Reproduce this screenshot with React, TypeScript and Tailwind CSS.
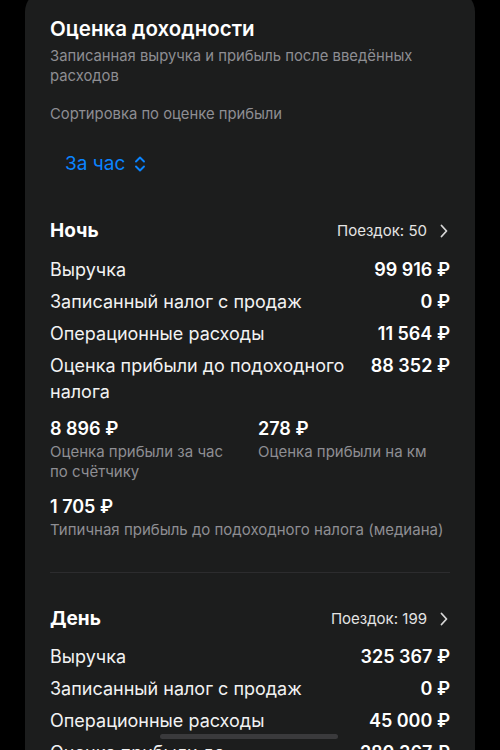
const font = { fontFamily: 'Inter, "Noto Sans", sans-serif' };

type Row = { label: string; value: string };

const Chevron = () => (
  <svg width="8" height="14" viewBox="0 0 8 14" fill="none" className="shrink-0">
    <path d="M1.5 1.5 L6.5 7 L1.5 12.5" stroke="#d6d6d6" strokeWidth="1.8" strokeLinecap="round" strokeLinejoin="round" />
  </svg>
);

const UpDown = () => (
  <svg width="12" height="18" viewBox="0 0 12 18" fill="none">
    <path d="M2 6.5 L6 2.5 L10 6.5" stroke="#0a84ff" strokeWidth="1.9" strokeLinecap="round" strokeLinejoin="round" />
    <path d="M2 11.5 L6 15.5 L10 11.5" stroke="#0a84ff" strokeWidth="1.9" strokeLinecap="round" strokeLinejoin="round" />
  </svg>
);

const Rows = ({ rows }: { rows: Row[] }) => (
  <div className="flex flex-col gap-[6px]">
    {rows.map((r) => (
      <div key={r.label} className="flex items-start justify-between gap-4 text-[18px] leading-[26px]">
        <span className="text-[#f2f2f2]">{r.label}</span>
        <span className="shrink-0 font-semibold text-white">{r.value}</span>
      </div>
    ))}
  </div>
);

const Header = ({ title, trips }: { title: string; trips: number }) => (
  <div className="flex items-center justify-between">
    <h3 className="text-[19px] font-bold leading-[24px] text-white">{title}</h3>
    <div className="flex items-center gap-[13px] pr-[2px] text-[15px] text-[#e4e4e4]">
      <span>Поездок: {trips}</span>
      <Chevron />
    </div>
  </div>
);

const Metric = ({ value, label, narrow }: { value: string; label: string; narrow?: boolean }) => (
  <div>
    <div className="text-[18px] font-semibold leading-[24px] text-white">{value}</div>
    <div className={`mt-[1px] text-[15px] leading-[20px] text-[#8e8e93] ${narrow ? 'max-w-[185px]' : ''}`}>{label}</div>
  </div>
);

export default function App() {
  return (
    <div className="relative h-[750px] overflow-hidden bg-black" style={font}>
      <div className="mx-[25px] -mt-[10px] rounded-t-[22px] bg-[#1c1d1d] px-[25px] pt-[26px] pb-10">
        <h1 className="text-[20.5px] font-semibold leading-[26px] text-white">Оценка доходности</h1>
        <p className="mt-[4px] text-[14.8px] leading-[20px] text-[#8e8e93]">
          Записанная выручка и прибыль после введённых расходов
        </p>
        <p className="mt-[18px] text-[14.8px] leading-[20px] text-[#8e8e93]">Сортировка по оценке прибыли</p>
        <div className="mt-[28px] flex items-center gap-[9px] pl-[15px] text-[19px] leading-[24px] text-[#0a84ff]">
          <span>За час</span>
          <UpDown />
        </div>

        <div className="mt-[43px]">
          <Header title="Ночь" trips={50} />
        </div>
        <div className="mt-[14px]">
          <Rows
            rows={[
              { label: 'Выручка', value: '99 916 ₽' },
              { label: 'Записанный налог с продаж', value: '0 ₽' },
              { label: 'Операционные расходы', value: '11 564 ₽' },
              { label: 'Оценка прибыли до подоходного налога', value: '88 352 ₽' },
            ]}
          />
        </div>
        <div className="mt-[12px] grid grid-cols-[208px_1fr]">
          <Metric value="8 896 ₽" label="Оценка прибыли за час по счётчику" narrow />
          <Metric value="278 ₽" label="Оценка прибыли на км" />
        </div>
        <div className="mt-[13px]">
          <Metric value="1 705 ₽" label="Типичная прибыль до подоходного налога (медиана)" />
        </div>

        <div className="mt-[32px] h-px bg-[#2c2c2e]" />

        <div className="mt-[34px]">
          <Header title="День" trips={199} />
        </div>
        <div className="mt-[13px]">
          <Rows
            rows={[
              { label: 'Выручка', value: '325 367 ₽' },
              { label: 'Записанный налог с продаж', value: '0 ₽' },
              { label: 'Операционные расходы', value: '45 000 ₽' },
              { label: 'Оценка прибыли до подоходного налога', value: '280 367 ₽' },
            ]}
          />
        </div>
      </div>

      <div className="absolute bottom-[11px] left-[160px] h-[5px] w-[178px] rounded-full bg-[#3a3a3c]" />
    </div>
  );
}
